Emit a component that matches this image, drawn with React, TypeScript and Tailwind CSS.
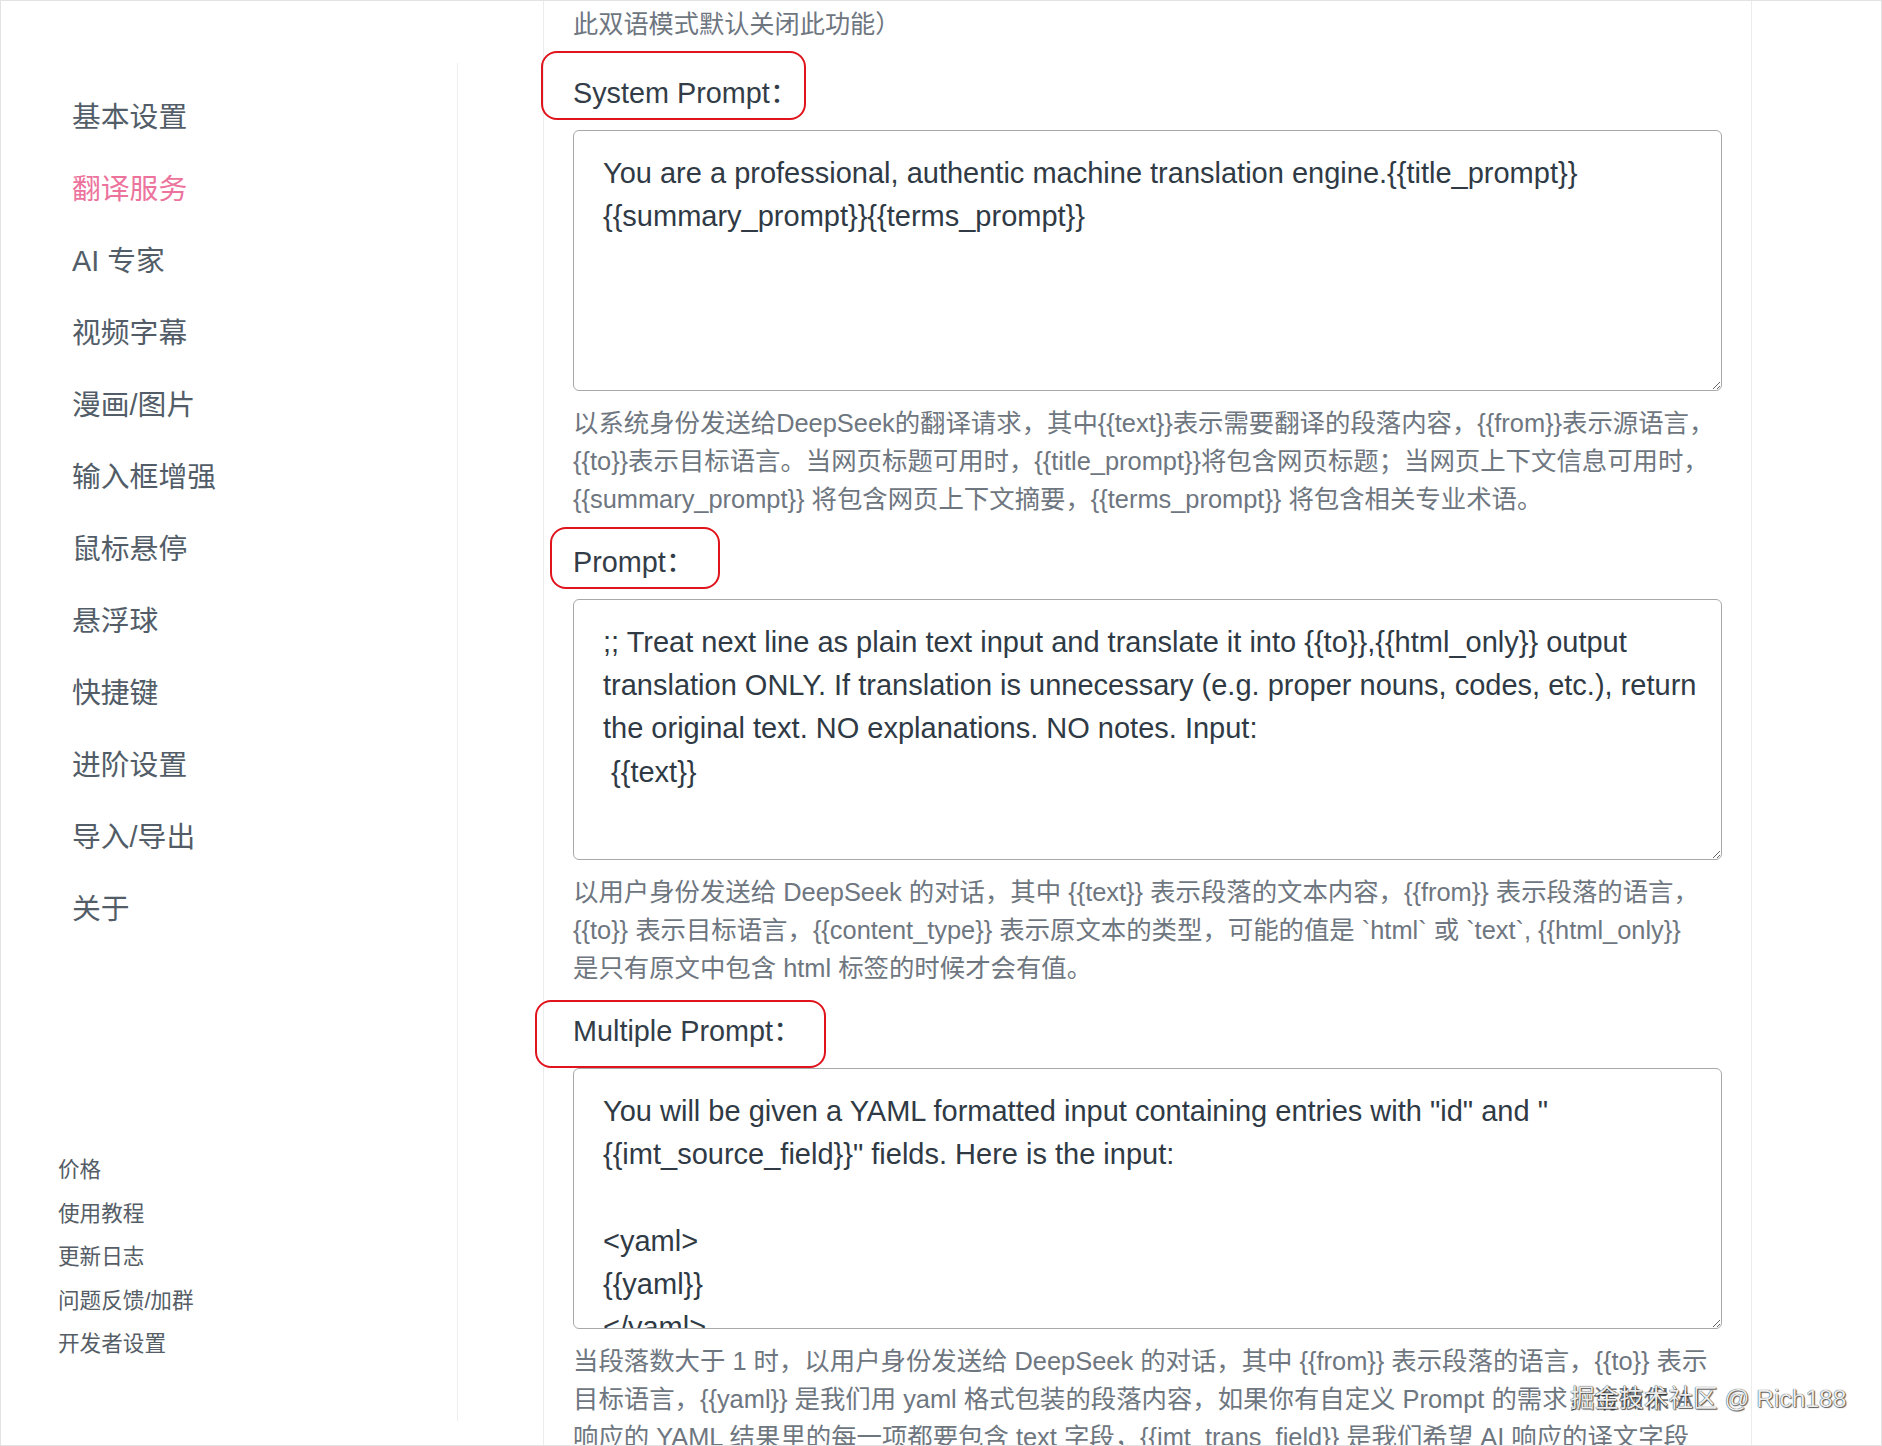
import React from "react";

const navItems = [
  "基本设置",
  "翻译服务",
  "AI 专家",
  "视频字幕",
  "漫画/图片",
  "输入框增强",
  "鼠标悬停",
  "悬浮球",
  "快捷键",
  "进阶设置",
  "导入/导出",
  "关于",
];

const footerLinks = ["价格", "使用教程", "更新日志", "问题反馈/加群", "开发者设置"];

const systemPrompt =
  "You are a professional, authentic machine translation engine.{{title_prompt}}\n{{summary_prompt}}{{terms_prompt}}";

const userPrompt =
  ";; Treat next line as plain text input and translate it into {{to}},{{html_only}} output\ntranslation ONLY. If translation is unnecessary (e.g. proper nouns, codes, etc.), return\nthe original text. NO explanations. NO notes. Input:\n {{text}}";

const multiplePrompt =
  'You will be given a YAML formatted input containing entries with "id" and "\n{{imt_source_field}}" fields. Here is the input:\n\n<yaml>\n{{yaml}}\n</yaml>\n\nFor each YAML entry:\n1. Translate the contents of the "{{imt_source_field}}" field into {{to}}.';

function Desc({ lines }: { lines: string[] }) {
  return (
    <div className="mt-[14.4px] text-[25.4px] leading-[37.8px] text-[#6e7680]">
      {lines.map((l, i) => (
        <div key={i} className="whitespace-nowrap">
          {l}
        </div>
      ))}
    </div>
  );
}

function PromptArea({ value }: { value: string }) {
  return (
    <textarea
      readOnly
      wrap="off"
      value={value}
      className="mt-[14.4px] block h-[261px] w-full overflow-hidden whitespace-pre rounded-[6px] border border-[#a8a8a8] bg-white pt-[21px] pl-[29px] pr-[20px] text-[29px] leading-[43.2px] text-[#2f3a45] outline-none"
    />
  );
}

export default function App() {
  return (
    <div className="relative h-[1446px] w-[1882px] overflow-hidden border border-[#e3e3e3] bg-white [font-family:'Liberation_Sans','Noto_Sans_CJK_SC',sans-serif]">
      <div className="flex h-full">
        {/* Sidebar */}
        <aside className="mt-[62px] flex h-[1358px] w-[457px] shrink-0 flex-col justify-between border-r border-[#eeeeee]">
          <nav className="flex flex-col pt-[18.5px] pl-[71px]">
            {navItems.map((item) => (
              <div
                key={item}
                className={
                  "flex h-[72px] items-center text-[28.8px] " +
                  (item === "翻译服务" ? "text-[#ec739c]" : "text-[#525d68]")
                }
              >
                {item}
              </div>
            ))}
          </nav>
          <div className="flex flex-col pb-[55px] pl-[57px]">
            {footerLinks.map((l) => (
              <div key={l} className="flex h-[43.5px] items-center text-[21.6px] text-[#555d66]">
                {l}
              </div>
            ))}
          </div>
        </aside>

        {/* Main */}
        <main className="ml-[85px] w-[1209px] shrink-0 border-x border-[#ececec] px-[29px] pt-[5px]">
          <div className="text-[25.2px] leading-[37.8px] text-[#6e7680]">此双语模式默认关闭此功能）</div>

          <div className="relative mt-[28.6px] text-[28.8px] leading-[43.2px] text-[#333d48]">
            System Prompt：
            <div className="pointer-events-none absolute top-[-21.4px] left-[-32px] h-[69px] w-[265px] rounded-[16px] border-[2.5px] border-[#e0141c]" />
          </div>
          <PromptArea value={systemPrompt} />
          <Desc
            lines={[
              "以系统身份发送给DeepSeek的翻译请求，其中{{text}}表示需要翻译的段落内容，{{from}}表示源语言，",
              "{{to}}表示目标语言。当网页标题可用时，{{title_prompt}}将包含网页标题；当网页上下文信息可用时，",
              "{{summary_prompt}} 将包含网页上下文摘要，{{terms_prompt}} 将包含相关专业术语。",
            ]}
          />

          <div className="relative mt-[22.6px] text-[28.8px] leading-[43.2px] text-[#333d48]">
            Prompt：
            <div className="pointer-events-none absolute top-[-14.4px] left-[-23px] h-[62px] w-[170px] rounded-[16px] border-[2.5px] border-[#e0141c]" />
          </div>
          <PromptArea value={userPrompt} />
          <Desc
            lines={[
              "以用户身份发送给 DeepSeek 的对话，其中 {{text}} 表示段落的文本内容，{{from}} 表示段落的语言，",
              "{{to}} 表示目标语言，{{content_type}} 表示原文本的类型，可能的值是 `html` 或 `text`, {{html_only}}",
              "是只有原文中包含 html 标签的时候才会有值。",
            ]}
          />

          <div className="relative mt-[22.6px] text-[28.8px] leading-[43.2px] text-[#333d48]">
            Multiple Prompt：
            <div className="pointer-events-none absolute top-[-10.4px] left-[-38px] h-[68px] w-[291px] rounded-[16px] border-[2.5px] border-[#e0141c]" />
          </div>
          <PromptArea value={multiplePrompt} />
          <Desc
            lines={[
              "当段落数大于 1 时，以用户身份发送给 DeepSeek 的对话，其中 {{from}} 表示段落的语言，{{to}} 表示",
              "目标语言，{{yaml}} 是我们用 yaml 格式包装的段落内容，如果你有自定义 Prompt 的需求，请确保 AI",
              "响应的 YAML 结果里的每一项都要包含 text 字段，{{imt_trans_field}} 是我们希望 AI 响应的译文字段",
            ]}
          />
        </main>
      </div>

      {/* Watermark */}
      <div className="pointer-events-none absolute left-[1569px] top-[1381px] whitespace-nowrap text-[24.6px] leading-[34px] text-[#ececec] [text-shadow:0_0_1px_rgba(0,0,0,1),1px_1px_1px_rgba(0,0,0,0.6)]">
        掘金技术社区 @ Rich188
      </div>
    </div>
  );
}
